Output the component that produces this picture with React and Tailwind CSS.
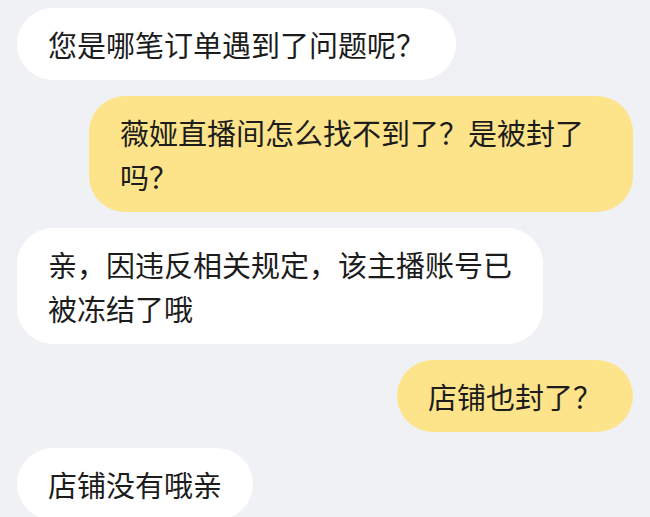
const font = { fontFamily: '"Noto Sans CJK SC", "Noto Sans", sans-serif' };

const messages = [
  { me: false, text: "您是哪笔订单遇到了问题呢？", w: "" },
  { me: true, text: "薇娅直播间怎么找不到了？是被封了吗？", w: "w-[544px]" },
  { me: false, text: "亲，因违反相关规定，该主播账号已被冻结了哦", w: "w-[526px]" },
  { me: true, text: "店铺也封了？", w: "" },
  { me: false, text: "店铺没有哦亲", w: "" },
];

function Bubble({ me, text, w }) {
  return (
    <div className={me ? "flex justify-end" : "flex justify-start"}>
      <div
        className={
          (me ? "bg-[#fde48a] " : "bg-white ") +
          (w ? w + " " : "w-fit ") +
          "rounded-[36px] px-[31px] py-[14px] text-[29px] leading-[44px] text-[#1c1c1c]"
        }
      >
        {text}
      </div>
    </div>
  );
}

export default function App() {
  return (
    <div
      style={font}
      className="w-[650px] h-[517px] overflow-hidden bg-[#f0f1f5] px-[17px] pt-[8px] flex flex-col gap-[16px]"
    >
      {messages.map((m, i) => (
        <Bubble key={i} {...m} />
      ))}
    </div>
  );
}
